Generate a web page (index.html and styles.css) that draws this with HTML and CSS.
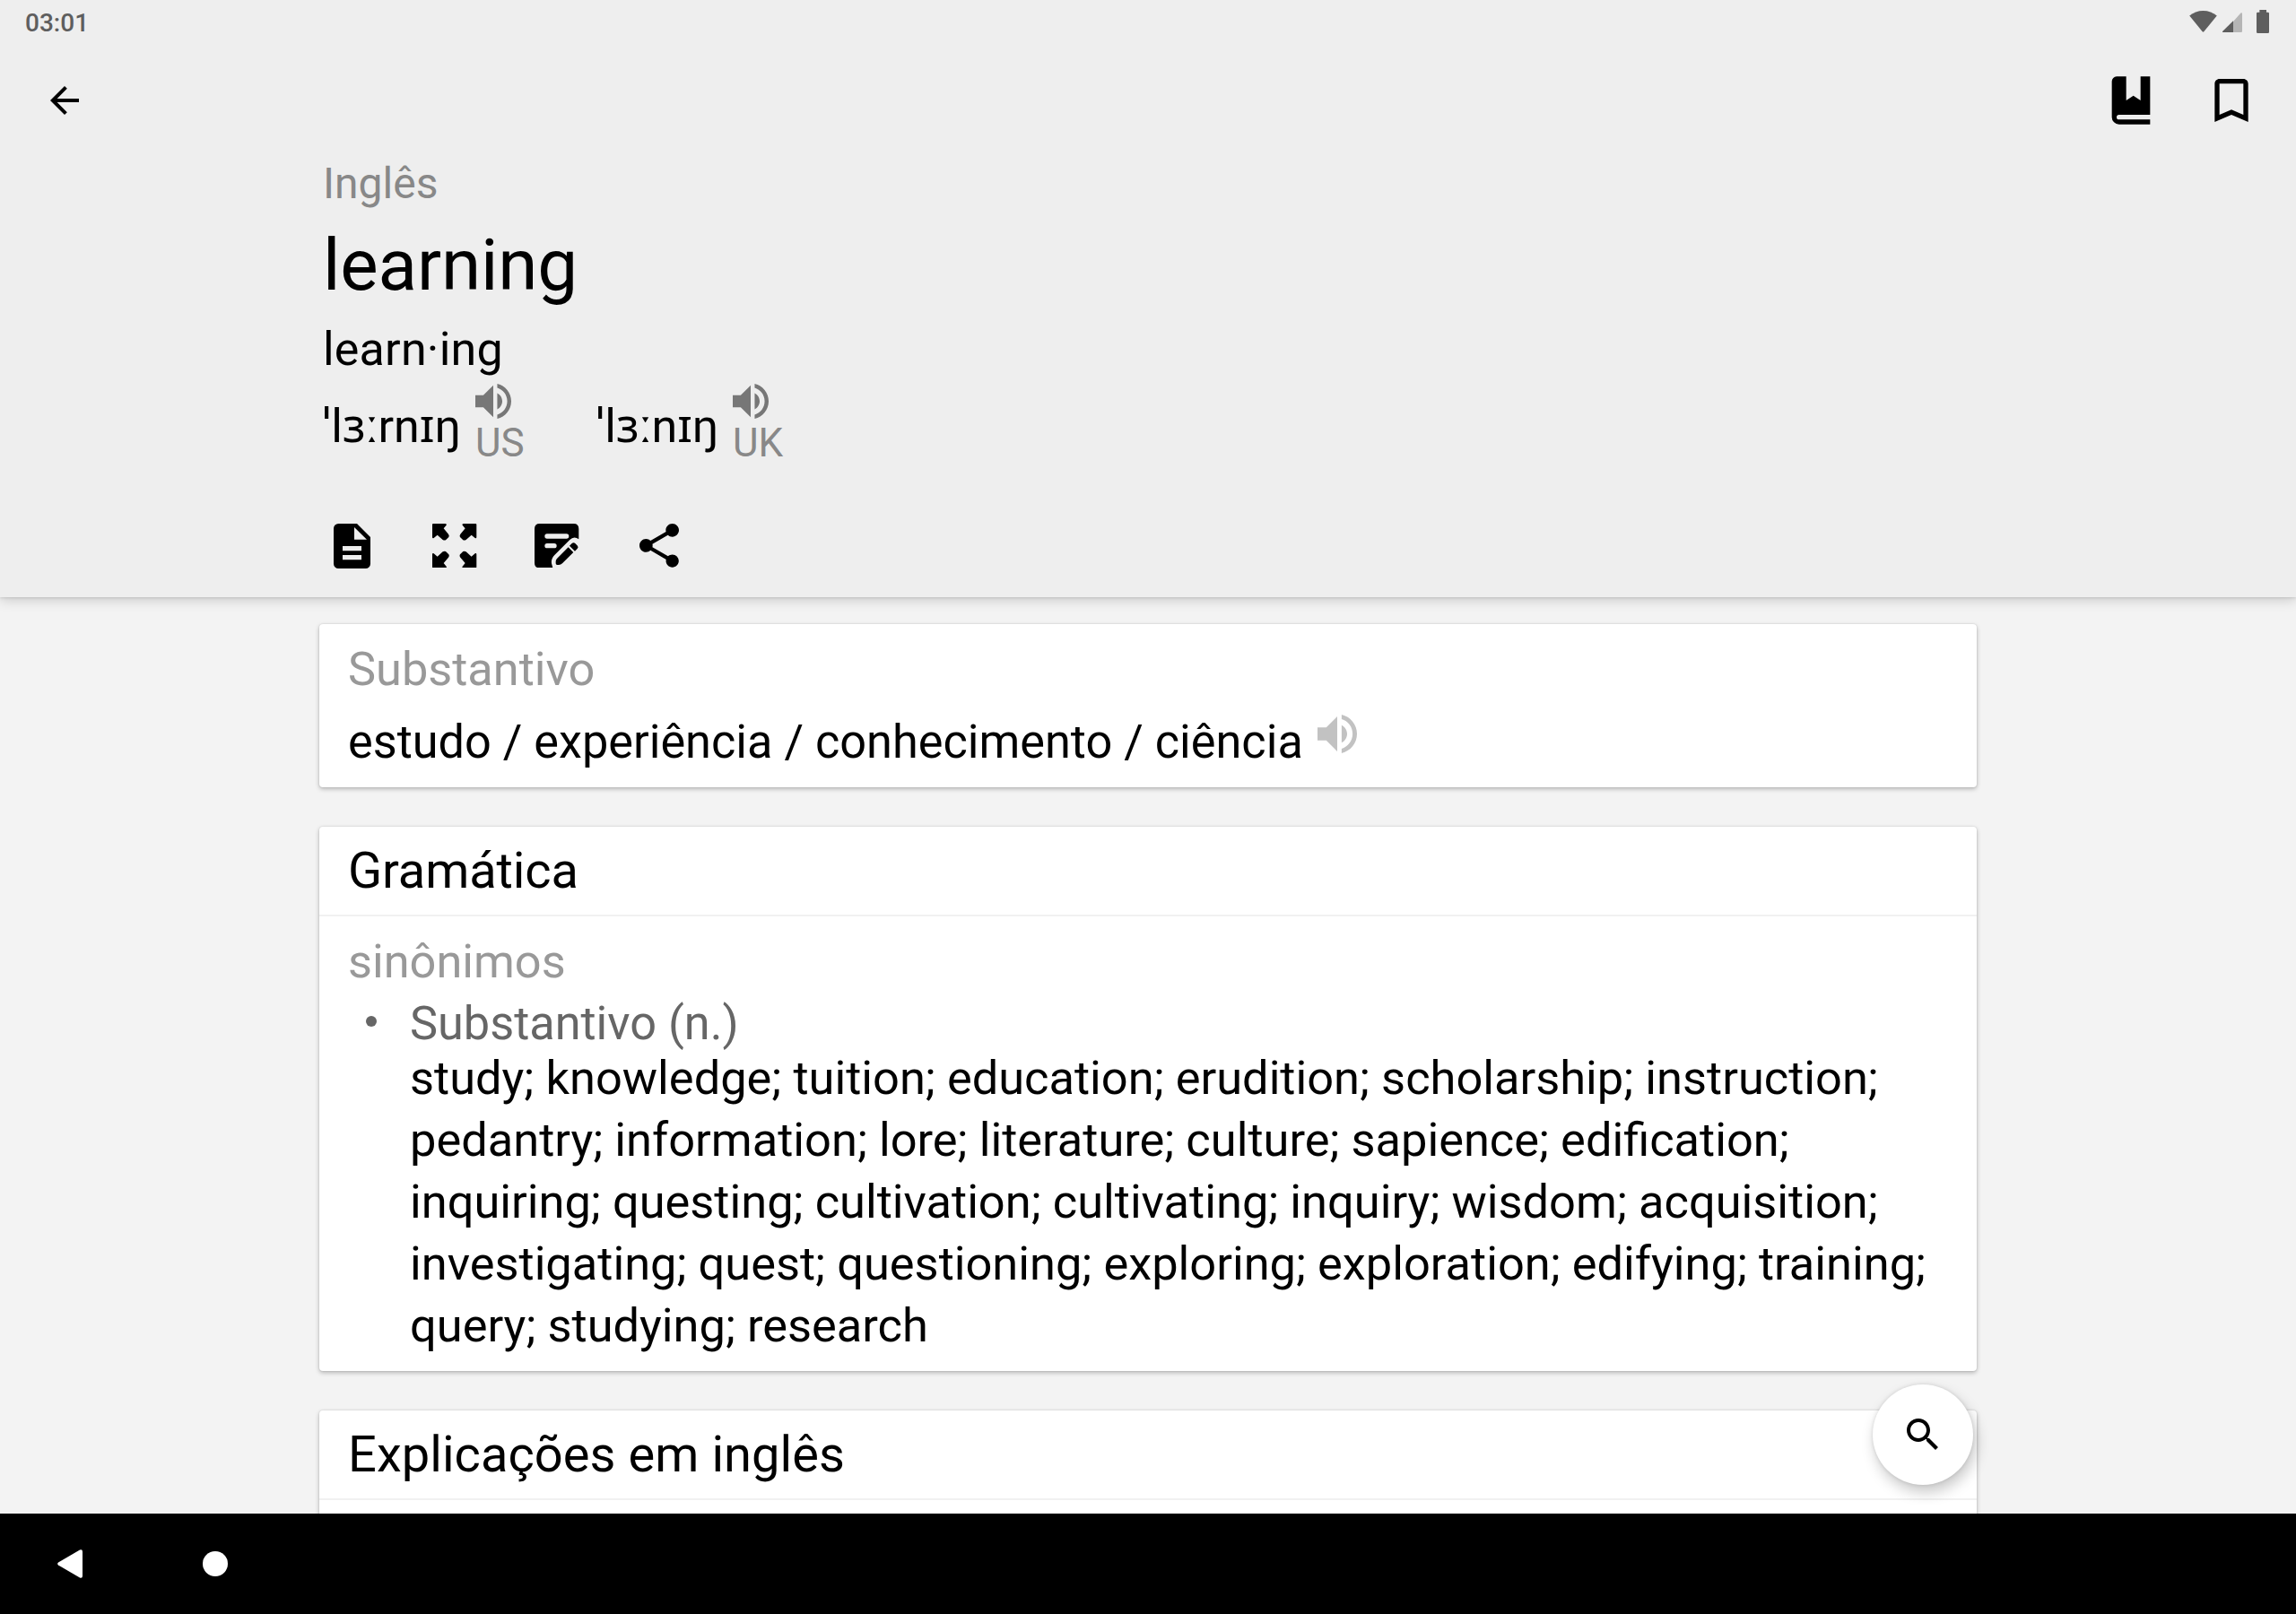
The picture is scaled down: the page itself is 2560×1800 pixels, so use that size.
FILE: index.html
```html
<!DOCTYPE html>
<html lang="pt">
<head>
<meta charset="utf-8">
<title>learning</title>
<link rel="stylesheet" href="styles.css">
</head>
<body>
<svg class="defs" width="0" height="0">
  <symbol id="volume" viewBox="3 3.23 18 17.54"><path d="M3 9v6h4l5 5V4L7 9H3zm13.5 3c0-1.77-1.02-3.29-2.5-4.03v8.05c1.48-.73 2.5-2.25 2.5-4.02zM14 3.23v2.06c2.89.86 5 3.54 5 6.71s-2.11 5.85-5 6.71v2.06c4.01-.91 7-4.49 7-8.77s-2.99-7.86-7-8.77z"/></symbol>
</svg>
<div class="screen">
  <header class="header">
    <div class="status">
      <span class="clock">03:01</span>
      <div class="status-icons">
        <svg class="wifi" viewBox="0 0 93 73"><path d="M0 17Q20 0 46.500 0T93 17L49 71Q46.500 74 44 71Z"/></svg>
        <svg class="signal" viewBox="0 0 66 66"><path class="dim" d="M36 30L62 1Q66-1 66 4V62Q66 66 62 66H36Z"/><path d="M36 28V66H3Q-2 66 1 62Z"/></svg>
        <svg class="battery" viewBox="0 0 42 78"><path d="M10 0H33V8H38Q42 8 42 12V74Q42 78 38 78H4Q0 78 0 74V12Q0 8 4 8H10Z"/></svg>
      </div>
    </div>
    <div class="toolbar">
      <svg class="back" viewBox="0 0 24 24"><path d="M20 11H7.830l5.590-5.590L12 4l-8 8 8 8 1.410-1.410L7.830 13H20v-2z"/></svg>
      <div class="actions">
        <svg class="action" viewBox="0 0 24 24"><path d="M6 2h4v10l3-2 3 2V2h4v16H7a1 1 0 0 0 0 2h13v2H7a3 3 0 0 1-3-3V4a2 2 0 0 1 2-2z"/></svg>
        <svg class="action" viewBox="0 0 24 24"><path d="M17 3H7c-1.100 0-1.990.9-1.990 2L5 21l7-3 7 3V5c0-1.100-.9-2-2-2zm0 15l-5-2.180L7 18V5h10v13z"/></svg>
      </div>
    </div>
    <div class="entry">
      <div class="language">Inglês</div>
      <h1 class="word">learning</h1>
      <div class="syllables">learn·ing</div>
      <div class="phonetics">
        <div class="phonetic us"><span class="ipa"><span class="stress">ˈ</span>lɜ<span class="long">ː</span>rnɪŋ</span><div class="accent"><svg class="speaker"><use href="#volume"/></svg><span>US</span></div></div>
        <div class="phonetic uk"><span class="ipa"><span class="stress">ˈ</span>lɜ<span class="long">ː</span>nɪŋ</span><div class="accent"><svg class="speaker"><use href="#volume"/></svg><span>UK</span></div></div>
      </div>
      <div class="tools">
        <svg class="tool-doc" viewBox="96 72 123 150"><path fill-rule="evenodd" d="M112 72H174L219 117V206a16 16 0 0 1-16 16H112a16 16 0 0 1-16-16V88a16 16 0 0 1 16-16zM165 84V125H207ZM126 147V163H189V147ZM126 177V193H189V177Z"/></svg>
        <svg class="tool-expand" viewBox="0 0 148 148">
          <g id="arrow"><path d="M3 0H44Q50 2 47 5L38 16L54 35Q58 40 55 45L45 55Q40 57 35 54L17 38L5 48Q0 50 0 45V3Q0 0 3 0Z"/></g>
          <use href="#arrow" transform="translate(148 0) scale(-1 1)"/>
          <use href="#arrow" transform="translate(0 148) scale(1 -1)"/>
          <use href="#arrow" transform="translate(148 148) scale(-1 -1)"/>
        </svg>
        <svg class="tool-note" viewBox="769 73 148 148"><path fill-rule="evenodd" d="M786 73H900Q917 73 917 90V125Q901 113 887 127L836 178Q824 190 826 206L830 221H786Q769 221 769 204V90Q769 73 786 73ZM811 107a8 8 0 0 0 0 16H876a8 8 0 0 0 0-16ZM811 139a8 8 0 0 0 0 16H835a8 8 0 0 0 0-16Z"/><path d="M882 152L899 169L862 206Q857 211 850 211H845Q840 211 840 206V200Q840 194 844 190ZM886 147L894 139Q900 134 905 139L913 147Q917 152 912 157L904 165Z"/></svg>
        <svg class="tool-share" viewBox="3 2 18 19.920"><path d="M18 16.080c-.76 0-1.440.3-1.960.77L8.910 12.700c.05-.23.09-.46.09-.7s-.04-.47-.09-.7l7.050-4.110c.54.5 1.250.81 2.040.81 1.660 0 3-1.340 3-3s-1.340-3-3-3-3 1.340-3 3c0 .24.040.47.090.7L8.040 9.810C7.500 9.310 6.790 9 6 9c-1.660 0-3 1.340-3 3s1.340 3 3 3c.79 0 1.500-.31 2.040-.81l7.120 4.160c-.05.21-.08.43-.08.65 0 1.610 1.310 2.920 2.920 2.920s2.920-1.310 2.920-2.920-1.310-2.920-2.920-2.920z"/></svg>
      </div>
    </div>
  </header>
  <main class="content">
    <section class="card translation">
      <div class="label">Substantivo</div>
      <div class="meaning"><span>estudo / experiência / conhecimento / ciência</span><svg class="speaker-light"><use href="#volume"/></svg></div>
    </section>
    <section class="card grammar">
      <h2 class="card-title tight">Gramática</h2>
      <div class="label sub">sinônimos</div>
      <div class="item">
        <div class="pos">Substantivo (n.)</div>
        <p class="synonyms">study; knowledge; tuition; education; erudition; scholarship; instruction;<br>pedantry; information; lore; literature; culture; sapience; edification;<br>inquiring; questing; cultivation; cultivating; inquiry; wisdom; acquisition;<br>investigating; quest; questioning; exploring; exploration; edifying; training;<br>query; studying; research</p>
      </div>
    </section>
    <section class="card explanations">
      <h2 class="card-title">Explicações em inglês</h2>
    </section>
    <div class="fab"><svg viewBox="0 0 24 24"><path d="M15.500 14h-.79l-.28-.27C15.410 12.590 16 11.110 16 9.500 16 5.910 13.090 3 9.500 3S3 5.910 3 9.500 5.910 16 9.500 16c1.610 0 3.090-.59 4.230-1.570l.27.28v.79l5 4.990L20.490 19l-4.990-5zm-6 0C7.010 14 5 11.990 5 9.500S7.010 5 9.500 5 14 7.010 14 9.500 11.990 14 9.500 14z"/></svg></div>
  </main>
  <nav class="navbar">
    <svg class="nav-back" viewBox="0 0 28 32"><path d="M1 14.500L25 .5Q28-.5 28 2.500V29.500Q28 32.500 25 31.500L1 17.500Q-.7 16 1 14.500Z"/></svg>
    <span class="nav-home"></span>
  </nav>
</div>
</body>
</html>
```

FILE: styles.css
```css
* { box-sizing: border-box; margin: 0; padding: 0; }
body { font-family: Roboto, "Noto Sans", sans-serif; font-weight: 400; color: #000; background: #f3f3f3; }
svg { display: block; flex: none; }
h1, h2 { font-weight: 400; }
.defs { position: absolute; }
.screen { width: 2560px; height: 1800px; display: flex; flex-direction: column; overflow: hidden; }

.header { height: 666px; flex: none; background: #eee; box-shadow: 0 2px 14px rgba(0,0,0,.2), 0 1px 3px rgba(0,0,0,.1); position: relative; z-index: 1; }
.status { height: 48px; padding: 0 30px 0 28px; display: flex; justify-content: space-between; color: #5e5e5e; fill: #5e5e5e; }
.clock { font-size: 28px; line-height: 51px; font-weight: 500; }
.status-icons { display: flex; align-items: flex-start; }
.wifi { width: 31px; height: 24px; margin: 12px 6px 0 0; }
.signal { width: 22px; height: 22px; margin: 14px 16px 0 0; }
.signal .dim { fill: #b5b5b5; }
.battery { width: 14px; height: 26px; margin-top: 11px; }

.toolbar { height: 128px; padding: 0 40px 0 48px; display: flex; align-items: center; justify-content: space-between; }
.back { width: 48px; height: 48px; }
.actions { display: flex; gap: 48px; }
.action { width: 64px; height: 64px; }

.entry { padding-left: 360px; }
.language { font-size: 48px; line-height: 58px; color: #888; }
.word { font-size: 80px; line-height: 96px; margin-top: 14px; letter-spacing: -.15px; }
.syllables { font-size: 52px; line-height: 60px; margin-top: 16px; letter-spacing: .2px; }
.phonetics { display: flex; margin-top: 8px; height: 100px; }
.phonetic { display: flex; }
.us { width: 305px; }
.ipa { font-size: 52px; line-height: 60px; padding-top: 18px; width: 170px; white-space: nowrap; }
.uk .ipa { width: 152px; }
.stress { margin-right: 1px; }
.long { font-family: Inter, sans-serif; line-height: 1; }
.accent { font-size: 44px; line-height: 52px; color: #888; }
.speaker { width: 40px; height: 39px; fill: #777; margin-bottom: 1px; }
.tools { display: flex; margin: 56px 0 0 12px; }
.tool-doc { width: 41px; height: 50px; }
.tool-expand { width: 49.3px; height: 49.3px; margin-left: 69.3px; }
.tool-note { width: 49.3px; height: 49.3px; margin-left: 64.7px; }
.tool-share { width: 44px; height: 48.7px; margin-left: 67.4px; }

.content { flex: 1; min-height: 0; overflow: hidden; position: relative; padding-top: 30px; display: flex; flex-direction: column; gap: 44px; align-items: center; }
.card { width: 1848px; flex: none; background: #fff; border-radius: 4px; box-shadow: 0 2px 5px rgba(0,0,0,.26), 0 0 2px rgba(0,0,0,.14); }
.translation { height: 182px; padding: 20px 32px 0; }
.label { font-size: 52.3px; line-height: 60px; color: #999; }
.meaning { display: flex; font-size: 52.25px; line-height: 60px; margin-top: 22px; }
.speaker-light { width: 44px; height: 43px; fill: #c2c2c2; margin: -1px 0 0 16px; }
.card-title { height: 100px; padding: 0 32px; font-size: 56px; line-height: 98px; letter-spacing: .06px; border-bottom: 2px solid #f1f1f1; }
.tight { letter-spacing: -.1px; }
.grammar { height: 607px; }
.sub { padding: 20px 32px 0; }
.item { padding-left: 101px; position: relative; }
.item::before { content: ""; position: absolute; left: 52px; top: 31px; width: 12px; height: 12px; border-radius: 50%; background: #666; }
.pos { font-size: 52.25px; line-height: 60px; padding-top: 10px; color: #666; }
.synonyms { font-size: 52.38px; line-height: 69px; margin-top: -4px; white-space: nowrap; }
.explanations { height: 200px; }
.fab { position: absolute; right: 360px; bottom: 32px; width: 112px; height: 112px; border-radius: 50%; background: #fff; display: flex; align-items: center; justify-content: center; box-shadow: 3px 8px 16px rgba(0,0,0,.22), 0 0 4px rgba(0,0,0,.12); }
.fab svg { width: 48px; height: 48px; }

.navbar { height: 112px; flex: none; background: #000; display: flex; align-items: center; padding-left: 64px; position: relative; z-index: 1; }
.nav-back { width: 28px; height: 32px; fill: #fff; }
.nav-home { width: 28px; height: 28px; border-radius: 50%; background: #fff; margin-left: 134px; }
```
